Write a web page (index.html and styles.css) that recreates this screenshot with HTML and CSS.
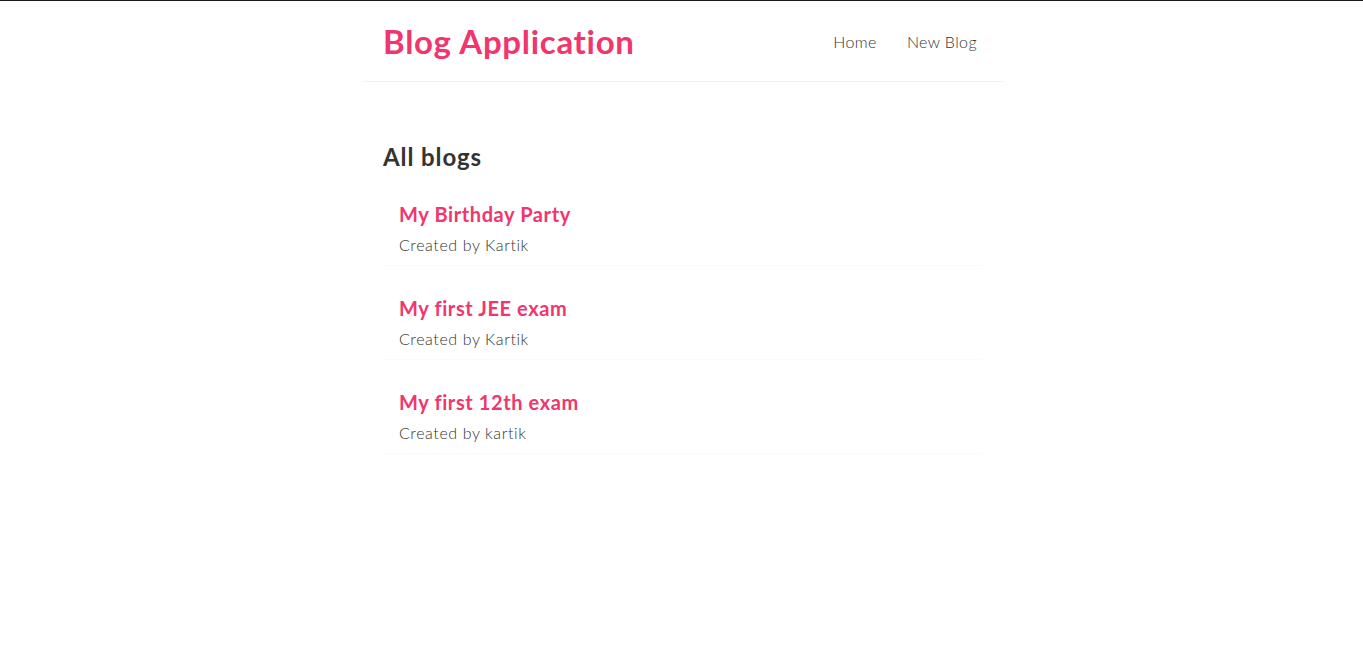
FILE: index.html
```html
<!DOCTYPE html>
<html lang="en">
<head>
<meta charset="utf-8">
<title>Blog Application</title>
<link rel="stylesheet" href="styles.css">
</head>
<body>
<div class="app">
  <nav class="navbar">
    <h1 class="brand">Blog Application</h1>
    <div class="links">
      <a href="#" class="link">Home</a>
      <a href="#" class="link">New Blog</a>
    </div>
  </nav>
  <main class="content">
    <h2 class="page-title">All blogs</h2>
    <div class="blog-list">
      <div class="blog-preview">
        <h2 class="blog-title">My Birthday Party</h2>
        <p class="blog-author">Created by Kartik</p>
      </div>
      <div class="blog-preview">
        <h2 class="blog-title">My first JEE exam</h2>
        <p class="blog-author">Created by Kartik</p>
      </div>
      <div class="blog-preview">
        <h2 class="blog-title">My first 12th exam</h2>
        <p class="blog-author">Created by kartik</p>
      </div>
    </div>
  </main>
</div>
</body>
</html>
```
FILE: styles.css
```css
* {
  margin: 0;
  font-family: Lato, "Noto Sans", sans-serif;
  color: #333;
}
body {
  border-top: 1px solid #1a1a1a;
  padding-left: 3px;
  background: #fff;
}
.navbar {
  padding: 20px;
  display: flex;
  align-items: center;
  max-width: 600px;
  margin: 0 auto;
  border-bottom: 1px solid #f2f2f2;
}
.brand {
  color: #f1356d;
  font-size: 33px;
  line-height: 40px;
  font-weight: 700;
  letter-spacing: 0.7px;
}
.links {
  margin-left: auto;
}
.link {
  margin-left: 16px;
  text-decoration: none;
  padding: 6px;
  font-size: 16px;
  font-weight: 300;
  letter-spacing: 0.4px;
  color: #333;
}
.link + .link {
  margin-left: 14px;
}
.content {
  max-width: 600px;
  margin: 40px auto;
  padding: 20px;
}
.page-title {
  font-size: 24px;
  line-height: 30px;
  font-weight: 700;
  letter-spacing: 0.9px;
}
.blog-preview {
  padding: 10px 16px;
  margin: 20px 0;
  border-bottom: 1px solid #fafafa;
}
.blog-title {
  font-size: 20px;
  line-height: 25px;
  color: #f1356d;
  font-weight: 700;
  margin-bottom: 8px;
  letter-spacing: 0.6px;
}
.blog-author {
  font-size: 16px;
  line-height: 20px;
  font-weight: 300;
  letter-spacing: 0.6px;
  color: #333;
}
```
